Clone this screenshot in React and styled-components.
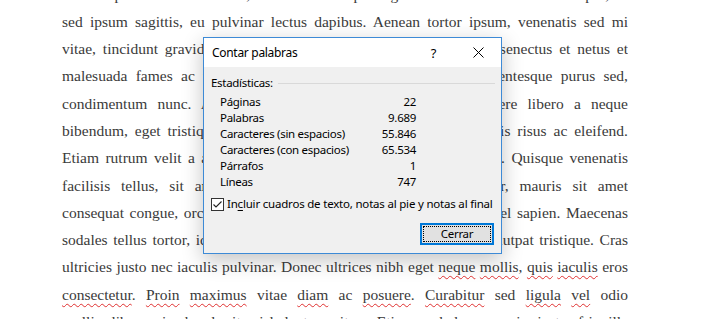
import React from 'react';
import styled, { createGlobalStyle } from 'styled-components';

const GlobalStyle = createGlobalStyle`
    html, body {
        margin: 0;
        padding: 0;
        background: #ffffff;
    }
`;

const Page = styled.div`
    position: relative;
    width: 722px;
    height: 319px;
    overflow: hidden;
    background: #ffffff;
`;

const DocumentText = styled.div`
    width: 566px;
    margin: -19.5px 0 0 62px;
    font-family: "Liberation Serif", "Times New Roman", serif;
    font-size: 15.5px;
    line-height: 27.3px;
    color: #3a3a3a;
`;

const Line = styled.div`
    height: 27.3px;
    overflow: hidden;
    text-align: justify;
    text-align-last: justify;
`;

const Misspelled = styled.span`
    text-decoration: underline wavy #e03030;
    text-decoration-thickness: 1px;
    text-underline-offset: 3px;
    text-decoration-skip-ink: none;
`;

const Dialog = styled.div`
    position: absolute;
    left: 203px;
    top: 37px;
    width: 297px;
    border: 1px solid #3d8ad6;
    background: #f0f0f0;
    box-shadow: 0 6px 20px rgba(0, 0, 0, 0.24);
    font-family: "Noto Sans", "Open Sans", sans-serif;
    font-size: 11.5px;
    letter-spacing: -0.3px;
    color: #000000;
`;

const TitleBar = styled.div`
    height: 29px;
    display: flex;
    align-items: center;
    background: #ffffff;
    padding-left: 8px;
`;

const Title = styled.div`
    flex: 1;
    font-size: 12px;
`;

const CaptionButton = styled.div`
    width: 45px;
    height: 29px;
    display: flex;
    align-items: center;
    justify-content: center;
    font-size: 13px;
`;

const Body = styled.div`
    padding: 8px 6px 8px 7px;
`;

const SectionHeader = styled.div`
    display: flex;
    align-items: center;
    height: 16px;
    line-height: 16px;
`;

const SectionRule = styled.div`
    flex: 1;
    margin-left: 5px;
    border-top: 1px solid #d9d9d9;
`;

const StatsGrid = styled.div`
    margin: 3px 0 0 9px;
    width: 196px;
    display: grid;
    grid-template-columns: 1fr auto;
    grid-auto-rows: 16px;
    line-height: 16px;
`;

const StatValue = styled.div`
    text-align: right;
`;

const CheckRow = styled.div`
    margin-top: 6px;
    display: flex;
    align-items: center;
    gap: 3px;
    height: 16px;
    line-height: 16px;
    letter-spacing: -0.2px;
`;

const CheckBox = styled.div`
    width: 11px;
    height: 11px;
    border: 1px solid #333333;
    background: #ffffff;
    display: flex;
    align-items: center;
    justify-content: center;
`;

const Accel = styled.span`
    text-decoration: underline;
    text-underline-offset: 2px;
`;

const ButtonRow = styled.div`
    margin-top: 11px;
    display: flex;
    justify-content: flex-end;
    padding-right: 1px;
`;

const PushButton = styled.div`
    position: relative;
    width: 70px;
    height: 18px;
    border: 2px solid #0078d7;
    background: #e1e1e1;
    display: flex;
    align-items: center;
    justify-content: center;
    line-height: 18px;

    &::after {
        content: '';
        position: absolute;
        inset: 1px;
        border: 1px dotted #000000;
    }
`;

const lines = [
    'Lorem ipsum dolor sit amet, consectetur adipiscing elit. Vivamus nec risus tempor, in',
    'sed ipsum sagittis, eu pulvinar lectus dapibus. Aenean tortor ipsum, venenatis sed mi',
    'vitae, tincidunt gravida nibh. Pellentesque habitant morbi tristique senectus et netus et',
    'malesuada fames ac turpis egestas. Nulla facilisi morbi elit. Pellentesque purus sed,',
    'condimentum nunc. Aliquam erat volutpat. Nam tincidunt posuere libero a neque',
    'bibendum, eget tristique elit, a tincidunt lorem. Nulla velit sed ipsis risus ac eleifend.',
    'Etiam rutrum velit a augue malesuada, ac commodo leo in posuere. Quisque venenatis',
    'facilisis tellus, sit amet interdum nulla finibus vel, et pulvinar, mauris sit amet',
    'consequat congue, orci lacus faucibus est, id fermentum velit arcu vel sapien. Maecenas',
    'sodales tellus tortor, id semper augue dictum in porta ac. Integer volutpat tristique. Cras',
];

const stats = [
    ['Páginas', '22'],
    ['Palabras', '9.689'],
    ['Caracteres (sin espacios)', '55.846'],
    ['Caracteres (con espacios)', '65.534'],
    ['Párrafos', '1'],
    ['Líneas', '747'],
];

export default function App() {
    return (
        <Page>
            <GlobalStyle />
            <DocumentText>
                {lines.map((text, i) => (
                    <Line key={i}>{text}</Line>
                ))}
                <Line>
                    ultricies justo nec iaculis pulvinar. Donec ultrices nibh eget <Misspelled>neque</Misspelled>{' '}
                    <Misspelled>mollis</Misspelled>, <Misspelled>quis</Misspelled> <Misspelled>iaculis</Misspelled> eros
                </Line>
                <Line>
                    <Misspelled>consectetur</Misspelled>. <Misspelled>Proin</Misspelled> <Misspelled>maximus</Misspelled> vitae{' '}
                    <Misspelled>diam</Misspelled> ac <Misspelled>posuere</Misspelled>. <Misspelled>Curabitur</Misspelled> sed{' '}
                    <Misspelled>ligula</Misspelled> <Misspelled>vel</Misspelled> odio
                </Line>
                <Line>mollis libero, in hendrerit nisl luctus vitae. Etiam vel lorem quis justo fringilla</Line>
            </DocumentText>

            <Dialog>
                <TitleBar>
                    <Title>Contar palabras</Title>
                    <CaptionButton>?</CaptionButton>
                    <CaptionButton>
                        <svg width="11" height="11" viewBox="0 0 11 11">
                            <path d="M0.5 0.5 L10.5 10.5 M10.5 0.5 L0.5 10.5" stroke="#000" strokeWidth="1" />
                        </svg>
                    </CaptionButton>
                </TitleBar>
                <Body>
                    <SectionHeader>
                        Estadísticas:
                        <SectionRule />
                    </SectionHeader>
                    <StatsGrid>
                        {stats.map(([label, value]) => (
                            <React.Fragment key={label}>
                                <div>{label}</div>
                                <StatValue>{value}</StatValue>
                            </React.Fragment>
                        ))}
                    </StatsGrid>
                    <CheckRow>
                        <CheckBox>
                            <svg width="11" height="11" viewBox="0 0 11 11">
                                <polyline points="1.5,5.5 4,8 9.5,2.5" fill="none" stroke="#222" strokeWidth="1.1" />
                            </svg>
                        </CheckBox>
                        <span>
                            In<Accel>c</Accel>luir cuadros de texto, notas al pie y notas al final
                        </span>
                    </CheckRow>
                    <ButtonRow>
                        <PushButton>Cerrar</PushButton>
                    </ButtonRow>
                </Body>
            </Dialog>
        </Page>
    );
}
